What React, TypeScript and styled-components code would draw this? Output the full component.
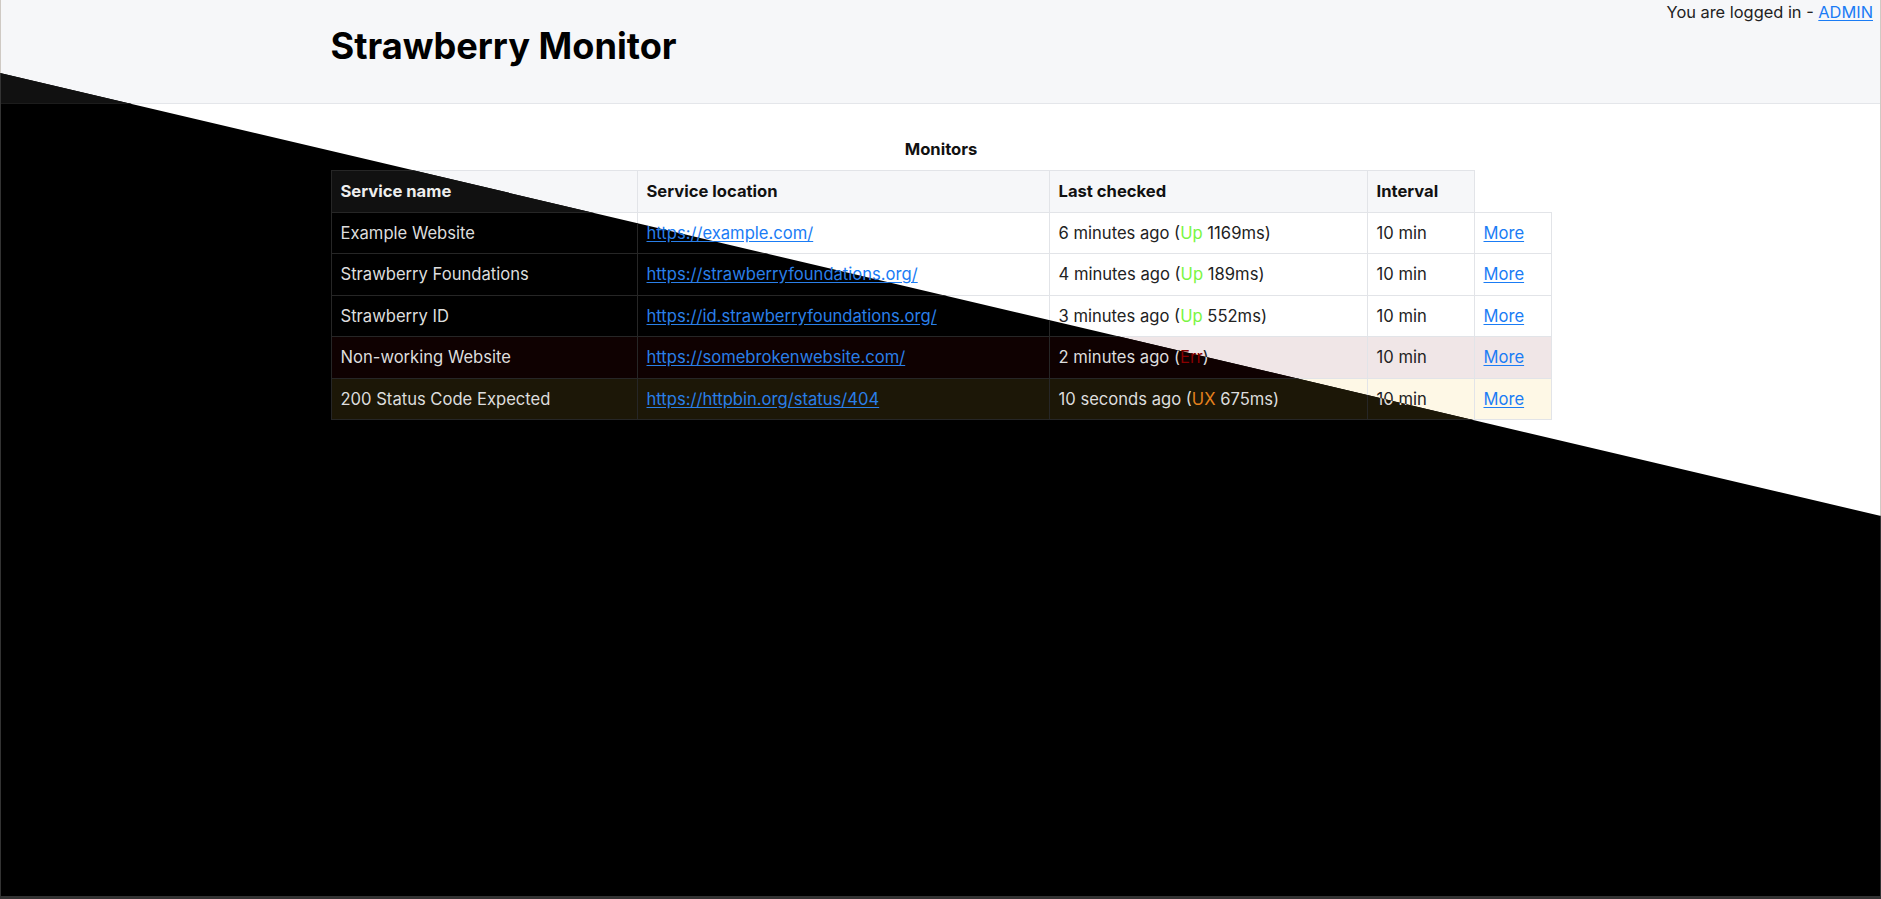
import React from "react";
import styled, { createGlobalStyle, ThemeProvider } from "styled-components";

const GlobalStyle = createGlobalStyle`
  html, body {
    margin: 0;
    padding: 0;
  }
  body {
    font-family: Inter, "Noto Sans", sans-serif;
    font-size: 16.6px;
  }
`;

type Theme = {
  frame: string;
  body: string;
  headerBg: string;
  headerLine: string;
  title: string;
  text: string;
  headText: string;
  thBg: string;
  border: string;
  link: string;
  errRow: string;
  warnRow: string;
};

const LIGHT: Theme = {
  frame: "#cfcac4",
  body: "#ffffff",
  headerBg: "#f6f7f9",
  headerLine: "#e4e6ea",
  title: "#000000",
  text: "#222222",
  headText: "#111111",
  thBg: "#f6f7f9",
  border: "#e2e4e8",
  link: "#1a7cf5",
  errRow: "#f0e6e7",
  warnRow: "#fef8e6",
};

const DARK: Theme = {
  frame: "#333333",
  body: "#000000",
  headerBg: "#111111",
  headerLine: "#1c1c1c",
  title: "#eeeeee",
  text: "#dddddd",
  headText: "#eeeeee",
  thBg: "#111111",
  border: "#262626",
  link: "#2a7fe8",
  errRow: "#0f0101",
  warnRow: "#1c1707",
};

// the two themes meet on this line (px from the top at the left and right edge)
const SPLIT_LEFT = 73;
const SPLIT_RIGHT = 516;

const Screen = styled.div`
  position: relative;
  height: 100vh;
  overflow: hidden;
`;

const DarkLayer = styled.div`
  position: absolute;
  inset: 0;
  clip-path: polygon(
    0 ${SPLIT_LEFT}px,
    100% ${SPLIT_RIGHT}px,
    100% 100%,
    0 100%
  );
`;

const Page = styled.div`
  box-sizing: border-box;
  height: 100vh;
  background: ${({ theme }) => theme.body};
  border-left: 1px solid ${({ theme }) => theme.frame};
  border-right: 1px solid ${({ theme }) => theme.frame};
  border-bottom: 3px solid ${({ theme }) => theme.frame};
  color: ${({ theme }) => theme.text};
`;

const Header = styled.header`
  display: grid;
  grid-template-columns: 1fr 1220px 1fr;
  height: 104px;
  box-sizing: border-box;
  background: ${({ theme }) => theme.headerBg};
  border-bottom: 1px solid ${({ theme }) => theme.headerLine};
`;

const Title = styled.h1`
  grid-column: 2;
  margin: 0;
  padding-top: 24px;
  font-size: 36.2px;
  line-height: 44px;
  font-weight: 700;
  color: ${({ theme }) => theme.title};
`;

const LoginNote = styled.div`
  grid-column: 3;
  justify-self: end;
  align-self: start;
  padding: 2px 7px 0 0;
  font-size: 16.4px;
  line-height: 20px;
  color: ${({ theme }) => theme.text};
`;

const Link = styled.a`
  color: ${({ theme }) => theme.link};
  text-decoration: underline;
  text-underline-offset: 2px;
`;

const Main = styled.main`
  width: 1220px;
  margin: 0 auto;
  padding-top: 24px;
`;

const Table = styled.table`
  width: 100%;
  table-layout: fixed;
  border-collapse: collapse;
`;

const Caption = styled.caption`
  padding: 10px 0;
  font-weight: 700;
  font-size: 16.6px;
  line-height: 22px;
  color: ${({ theme }) => theme.headText};
`;

const HeadCell = styled.th`
  text-align: left;
  height: 40.5px;
  padding: 0 9px;
  font-weight: 700;
  font-size: 16.6px;
  background: ${({ theme }) => theme.thBg};
  color: ${({ theme }) => theme.headText};
  border: 1px solid ${({ theme }) => theme.border};
`;

type RowState = "ok" | "err" | "warn";

const Row = styled.tr<{ $state: RowState }>`
  background: ${({ theme, $state }) =>
    $state === "err" ? theme.errRow : $state === "warn" ? theme.warnRow : "transparent"};
`;

const Cell = styled.td`
  height: 40.5px;
  padding: 0 9px;
  font-size: 16.6px;
  white-space: nowrap;
  border: 1px solid ${({ theme }) => theme.border};
`;

const Status = styled.span<{ $state: RowState }>`
  color: ${({ $state }) =>
    $state === "err" ? "#8a0000" : $state === "warn" ? "#e5811d" : "#7af542"};
`;

type Monitor = {
  name: string;
  url: string;
  ago: string;
  status: string;
  ms?: string;
  state: RowState;
};

const MONITORS: Monitor[] = [
  { name: "Example Website", url: "https://example.com/", ago: "6 minutes ago", status: "Up", ms: "1169ms", state: "ok" },
  { name: "Strawberry Foundations", url: "https://strawberryfoundations.org/", ago: "4 minutes ago", status: "Up", ms: "189ms", state: "ok" },
  { name: "Strawberry ID", url: "https://id.strawberryfoundations.org/", ago: "3 minutes ago", status: "Up", ms: "552ms", state: "ok" },
  { name: "Non-working Website", url: "https://somebrokenwebsite.com/", ago: "2 minutes ago", status: "Err", state: "err" },
  { name: "200 Status Code Expected", url: "https://httpbin.org/status/404", ago: "10 seconds ago", status: "UX", ms: "675ms", state: "warn" },
];

const MonitorPage = () => (
  <Page>
    <Header>
      <Title>Strawberry Monitor</Title>
      <LoginNote>
        You are logged in - <Link href="#">ADMIN</Link>
      </LoginNote>
    </Header>
    <Main>
      <Table>
        <Caption>Monitors</Caption>
        <colgroup>
          <col style={{ width: 306 }} />
          <col style={{ width: 412 }} />
          <col style={{ width: 318 }} />
          <col style={{ width: 107 }} />
          <col style={{ width: 77 }} />
        </colgroup>
        <thead>
          <tr>
            <HeadCell>Service name</HeadCell>
            <HeadCell>Service location</HeadCell>
            <HeadCell>Last checked</HeadCell>
            <HeadCell>Interval</HeadCell>
          </tr>
        </thead>
        <tbody>
          {MONITORS.map((m) => (
            <Row key={m.name} $state={m.state}>
              <Cell>{m.name}</Cell>
              <Cell>
                <Link href={m.url}>{m.url}</Link>
              </Cell>
              <Cell>
                {m.ago} (<Status $state={m.state}>{m.status}</Status>
                {m.ms ? ` ${m.ms}` : ""})
              </Cell>
              <Cell>10 min</Cell>
              <Cell>
                <Link href="#">More</Link>
              </Cell>
            </Row>
          ))}
        </tbody>
      </Table>
    </Main>
  </Page>
);

export default function App() {
  return (
    <>
      <GlobalStyle />
      <Screen>
        <ThemeProvider theme={LIGHT}>
          <MonitorPage />
        </ThemeProvider>
        <DarkLayer>
          <ThemeProvider theme={DARK}>
            <MonitorPage />
          </ThemeProvider>
        </DarkLayer>
      </Screen>
    </>
  );
}
